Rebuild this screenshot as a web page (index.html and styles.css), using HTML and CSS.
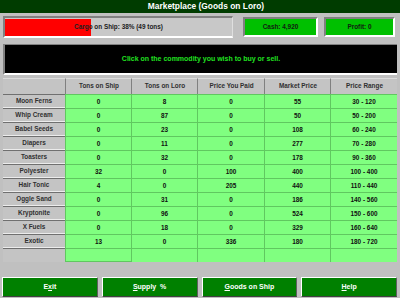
FILE: index.html
```html
<!DOCTYPE html>
<html>
<head>
<meta charset="utf-8">
<link rel="stylesheet" href="styles.css">
</head>
<body>
<div class="app">
  <div class="titlebar">Marketplace (Goods on Loro)</div>
  <div class="status">
    <div class="cargo">
      <div class="cargo-fill" style="width:38%"></div>
      <div class="cargo-text">Cargo on Ship: 38% (49 tons)</div>
    </div>
    <div class="stat cash">Cash: 4,920</div>
    <div class="stat profit">Profit: 0</div>
  </div>
  <div class="message">Click on the commodity you wish to buy or sell.</div>
  <div class="table">
    <div class="hd corner"></div>
    <div class="hd">Tons on Ship</div>
    <div class="hd">Tons on Loro</div>
    <div class="hd">Price You Paid</div>
    <div class="hd">Market Price</div>
    <div class="hd">Price Range</div>

    <div class="nm">Moon Ferns</div><div class="c">0</div><div class="c">8</div><div class="c">0</div><div class="c">55</div><div class="c">30 - 120</div>
    <div class="nm">Whip Cream</div><div class="c">0</div><div class="c">87</div><div class="c">0</div><div class="c">50</div><div class="c">50 - 200</div>
    <div class="nm">Babel Seeds</div><div class="c">0</div><div class="c">23</div><div class="c">0</div><div class="c">108</div><div class="c">60 - 240</div>
    <div class="nm">Diapers</div><div class="c">0</div><div class="c">11</div><div class="c">0</div><div class="c">277</div><div class="c">70 - 280</div>
    <div class="nm">Toasters</div><div class="c">0</div><div class="c">32</div><div class="c">0</div><div class="c">178</div><div class="c">90 - 360</div>
    <div class="nm">Polyester</div><div class="c">32</div><div class="c">0</div><div class="c">100</div><div class="c">400</div><div class="c">100 - 400</div>
    <div class="nm">Hair Tonic</div><div class="c">4</div><div class="c">0</div><div class="c">205</div><div class="c">440</div><div class="c">110 - 440</div>
    <div class="nm">Oggle Sand</div><div class="c">0</div><div class="c">31</div><div class="c">0</div><div class="c">186</div><div class="c">140 - 560</div>
    <div class="nm">Kryptonite</div><div class="c">0</div><div class="c">96</div><div class="c">0</div><div class="c">524</div><div class="c">150 - 600</div>
    <div class="nm">X Fuels</div><div class="c">0</div><div class="c">18</div><div class="c">0</div><div class="c">329</div><div class="c">160 - 640</div>
    <div class="nm">Exotic</div><div class="c">13</div><div class="c">0</div><div class="c">336</div><div class="c">180</div><div class="c">180 - 720</div>
    <div class="nm blank"></div><div class="c sel"></div><div class="c"></div><div class="c"></div><div class="c"></div><div class="c"></div>
  </div>
  <div class="buttons">
    <div class="btn">E<u>x</u>it</div>
    <div class="btn"><u>S</u>upply&nbsp;&nbsp;%</div>
    <div class="btn"><u>G</u>oods on Ship</div>
    <div class="btn"><u>H</u>elp</div>
  </div>
</div>
</body>
</html>
```
FILE: styles.css
```css
* { box-sizing: border-box; }
html, body { margin: 0; padding: 0; }
body {
  width: 400px;
  height: 298px;
  overflow: hidden;
  background: #c0c0c0;
  font-family: "Liberation Sans", Arial, sans-serif;
  font-weight: bold;
}
.app {
  width: 400px;
  height: 298px;
  display: flex;
  flex-direction: column;
}
.titlebar {
  height: 13px;
  background: #003c00;
  color: #ffffff;
  font-size: 8.4px;
  line-height: 13px;
  text-align: center;
  padding-left: 12px;
}
.status {
  display: flex;
  align-items: flex-start;
  margin-top: 3px;
  padding: 0 5px 0 3px;
  height: 23px;
}
.cargo {
  position: relative;
  width: 230px;
  height: 22px;
  border-top: 2px solid #808080;
  border-left: 2px solid #808080;
  border-right: 1px solid #dfdfdf;
  border-bottom: 2px solid #ffffff;
  background: #c8c8c8;
  padding: 1px 0;
}
.cargo-fill {
  height: 17px;
  background: #ff0000;
  margin-left: 0;
}
.cargo-text {
  position: absolute;
  left: 0; right: 0; top: 0; bottom: 0;
  font-size: 6.4px;
  line-height: 18px;
  text-align: center;
  color: #202020;
}
.stat {
  margin-top: 1px;
  height: 20px;
  background: #00c000;
  border-top: 2px solid #808080;
  border-left: 2px solid #808080;
  border-right: 2px solid #ffffff;
  border-bottom: 2px solid #ffffff;
  font-size: 6.4px;
  line-height: 16px;
  text-align: center;
  color: #102010;
}
.cash { width: 75px; margin-left: 10px; }
.profit { width: 71px; margin-left: 6px; }
.message {
  margin: 5px 3px 0 3px;
  height: 31px;
  background: #000000;
  border-left: 2px solid #808080;
  border-top: 1px solid #808080;
  border-bottom: 2px solid #ffffff;
  color: #20e020;
  font-size: 7px;
  line-height: 27px;
  text-align: center;
}
.table {
  margin: 3px 3px 0 3px;
  display: grid;
  grid-template-columns: 62px 66px 66px 67px 66px 67px;
  grid-template-rows: 16px repeat(12, 14px);
  font-size: 6.4px;
  color: #101010;
}
.hd {
  background: #c4c4c4;
  border-left: 1px solid #808080;
  border-top: 1px solid #dcdcdc;
  text-align: center;
  line-height: 14px;
  color: #303030;
  padding-left: 1px;
}
.hd.corner { border-left: none; }
.nm {
  background: #c4c4c4;
  border-top: 1px solid #707070;
  border-bottom: 1px solid #ececec;
  text-align: center;
  line-height: 12px;
  color: #303030;
}
.nm.blank { border-bottom: none; }
.c {
  background: #80ff80;
  border-left: 1px solid #60c860;
  border-top: 1px solid #60c860;
  text-align: center;
  line-height: 13px;
}
.c.sel { border-bottom: 1px solid #60c860; }
.buttons {
  margin-top: auto;
  display: flex;
  gap: 4px;
  padding: 0 3px 1px 2px;
}
.btn {
  flex: 1;
  height: 20px;
  background: #008000;
  border-top: 1px solid #ffffff;
  border-left: 1px solid #ffffff;
  border-right: 1px solid #606060;
  border-bottom: 1px solid #404040;
  color: #ffffff;
  font-size: 7px;
  line-height: 18px;
  text-align: center;
}
.btn u { text-decoration: underline; }
```
